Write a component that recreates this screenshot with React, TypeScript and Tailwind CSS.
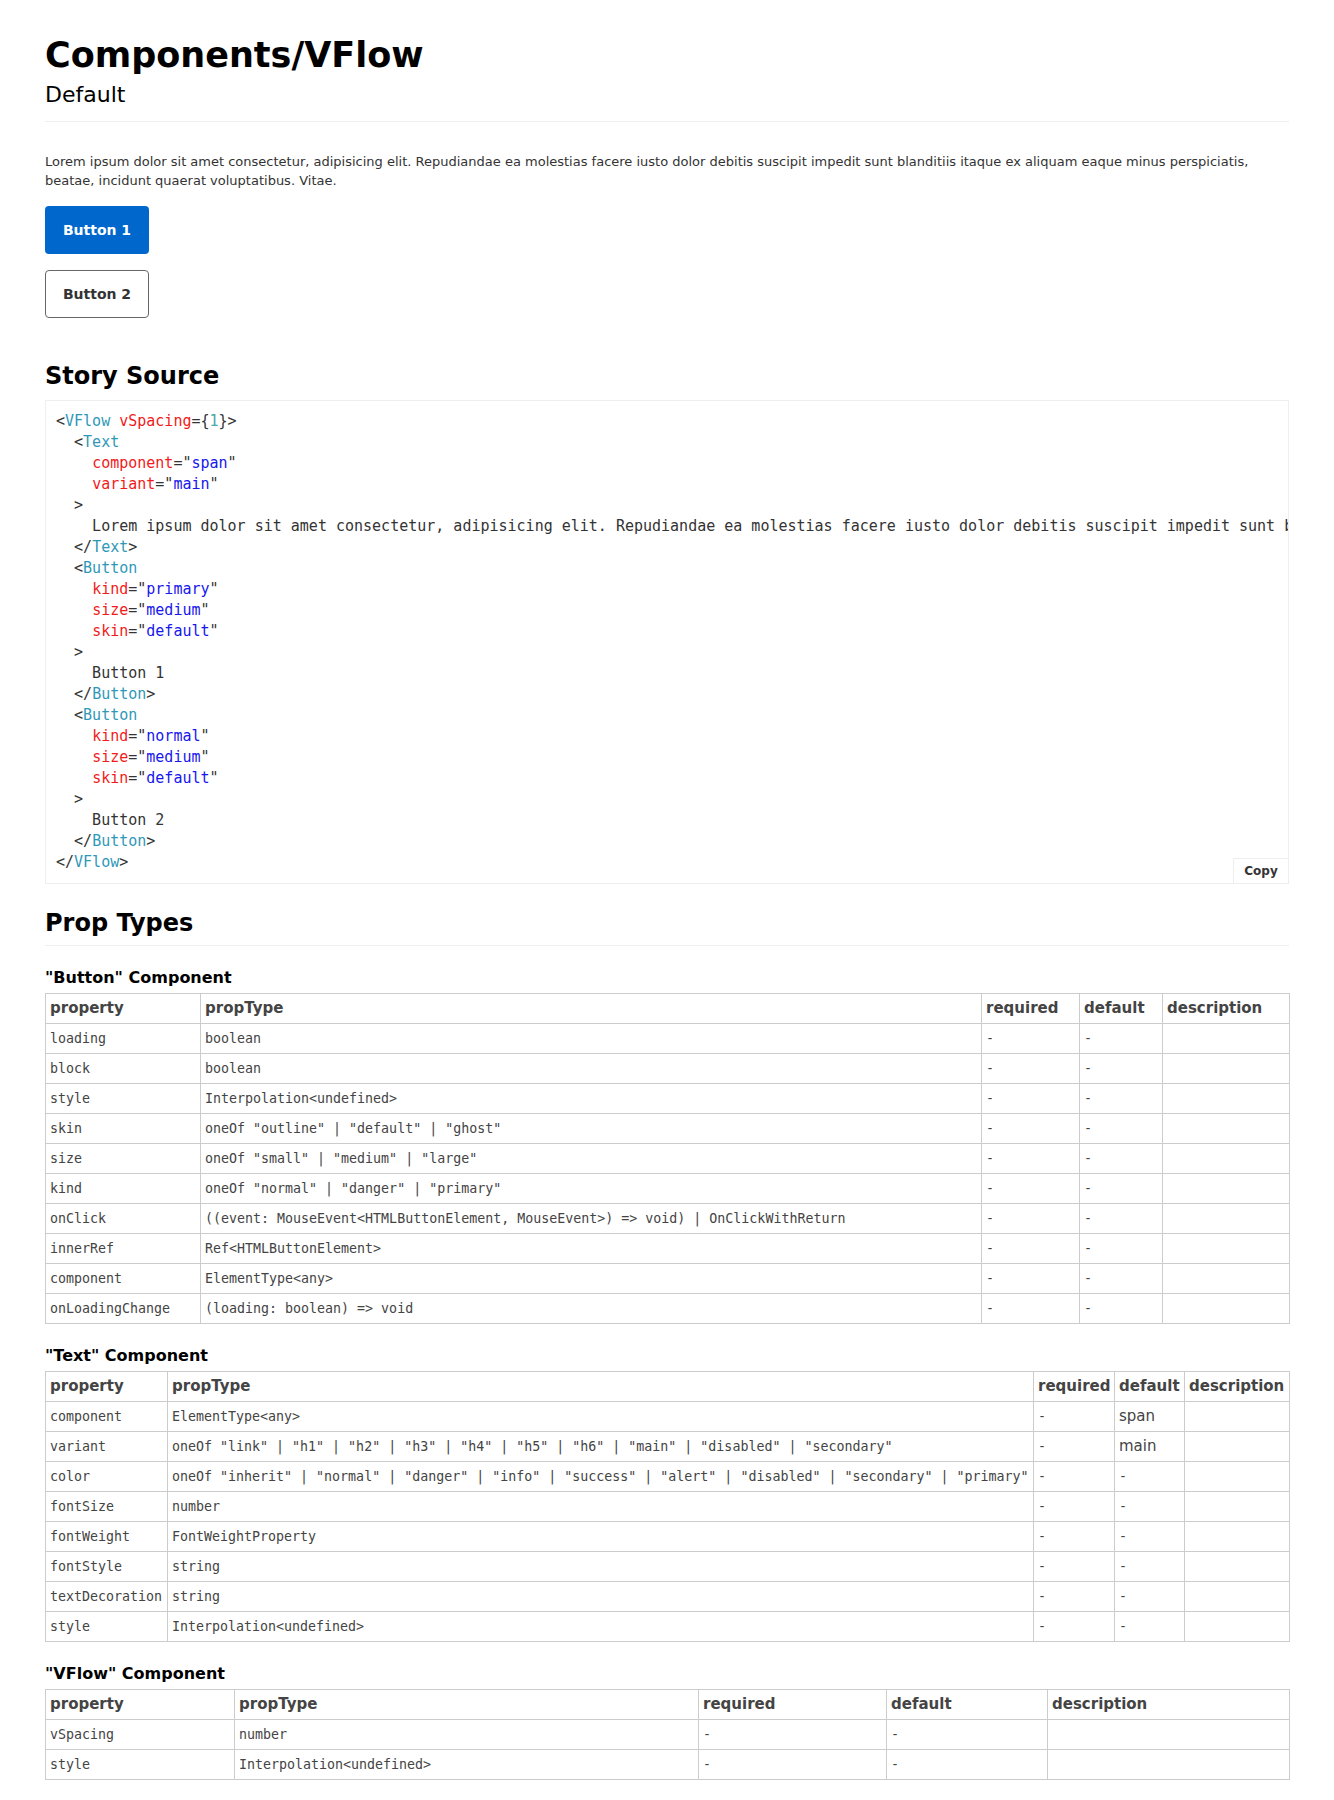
import React from 'react';

const sans = "font-['DejaVu_Sans',sans-serif]";
const mono = "font-['DejaVu_Sans_Mono',monospace]";

const LOREM =
  'Lorem ipsum dolor sit amet consectetur, adipisicing elit. Repudiandae ea molestias facere iusto dolor debitis suscipit impedit sunt blanditiis itaque ex aliquam eaque minus perspiciatis, beatae, incidunt quaerat voluptatibus. Vitae.';

// colores del resaltado de sintaxis
const P = 'text-[#333]';
const T = 'text-[#2f98b8]';
const A = 'text-[#f21b1b]';
const S = 'text-[#1717ee]';
const N = 'text-[#4aa8a8]';

type Seg = [string, string];

const attr = (name: string, value: string): Seg[] => [
  [P, '    '],
  [A, name],
  [P, '="'],
  [S, value],
  [P, '"'],
];

const codeLines: Seg[][] = [
  [[P, '<'], [T, 'VFlow'], [P, ' '], [A, 'vSpacing'], [P, '={'], [N, '1'], [P, '}>']],
  [[P, '  <'], [T, 'Text']],
  attr('component', 'span'),
  attr('variant', 'main'),
  [[P, '  >']],
  [[P, '    ' + LOREM]],
  [[P, '  </'], [T, 'Text'], [P, '>']],
  [[P, '  <'], [T, 'Button']],
  attr('kind', 'primary'),
  attr('size', 'medium'),
  attr('skin', 'default'),
  [[P, '  >']],
  [[P, '    Button 1']],
  [[P, '  </'], [T, 'Button'], [P, '>']],
  [[P, '  <'], [T, 'Button']],
  attr('kind', 'normal'),
  attr('size', 'medium'),
  attr('skin', 'default'),
  [[P, '  >']],
  [[P, '    Button 2']],
  [[P, '  </'], [T, 'Button'], [P, '>']],
  [[P, '</'], [T, 'VFlow'], [P, '>']],
];

type Row = { name: string; type: string; def?: string };

const buttonProps: Row[] = [
  { name: 'loading', type: 'boolean' },
  { name: 'block', type: 'boolean' },
  { name: 'style', type: 'Interpolation<undefined>' },
  { name: 'skin', type: 'oneOf "outline" | "default" | "ghost"' },
  { name: 'size', type: 'oneOf "small" | "medium" | "large"' },
  { name: 'kind', type: 'oneOf "normal" | "danger" | "primary"' },
  { name: 'onClick', type: '((event: MouseEvent<HTMLButtonElement, MouseEvent>) => void) | OnClickWithReturn' },
  { name: 'innerRef', type: 'Ref<HTMLButtonElement>' },
  { name: 'component', type: 'ElementType<any>' },
  { name: 'onLoadingChange', type: '(loading: boolean) => void' },
];

const textProps: Row[] = [
  { name: 'component', type: 'ElementType<any>', def: 'span' },
  {
    name: 'variant',
    type: 'oneOf "link" | "h1" | "h2" | "h3" | "h4" | "h5" | "h6" | "main" | "disabled" | "secondary"',
    def: 'main',
  },
  {
    name: 'color',
    type: 'oneOf "inherit" | "normal" | "danger" | "info" | "success" | "alert" | "disabled" | "secondary" | "primary"',
  },
  { name: 'fontSize', type: 'number' },
  { name: 'fontWeight', type: 'FontWeightProperty' },
  { name: 'fontStyle', type: 'string' },
  { name: 'textDecoration', type: 'string' },
  { name: 'style', type: 'Interpolation<undefined>' },
];

const vflowProps: Row[] = [
  { name: 'vSpacing', type: 'number' },
  { name: 'style', type: 'Interpolation<undefined>' },
];

function PropTable({ title, rows, cols }: { title: string; rows: Row[]; cols: string[] }) {
  const th = 'border border-[#ccc] px-[4px] py-0 text-left text-[15px] font-bold leading-[29px] text-[#444]';
  const td = 'border border-[#ccc] px-[4px] py-0 text-[13.3px] leading-[29px] text-[#444] whitespace-nowrap';
  return (
    <div>
      <h3 className="mt-[22px] text-[16px] font-bold leading-[20px] text-black">"{title}" Component</h3>
      <table className="mt-[5px] w-full table-fixed border-collapse">
        <colgroup>
          {cols.map((c, i) => (
            <col key={i} className={c} />
          ))}
        </colgroup>
        <thead>
          <tr>
            <th className={th}>property</th>
            <th className={th}>propType</th>
            <th className={th}>required</th>
            <th className={th}>default</th>
            <th className={th}>description</th>
          </tr>
        </thead>
        <tbody>
          {rows.map((r) => (
            <tr key={r.name}>
              <td className={`${td} ${mono}`}>{r.name}</td>
              <td className={`${td} ${mono}`}>{r.type}</td>
              <td className={`${td} ${mono}`}>-</td>
              {r.def ? (
                <td className={`${td} ${sans} text-[15px]`}>{r.def}</td>
              ) : (
                <td className={`${td} ${mono}`}>-</td>
              )}
              <td className={td}></td>
            </tr>
          ))}
        </tbody>
      </table>
    </div>
  );
}

export default function App() {
  return (
    <div className={`min-h-[1800px] bg-white px-[45px] ${sans}`}>
      <div className="border-b border-[#eee] pt-[30px] pb-[13px]">
        <h1 className="text-[35px] font-bold leading-[51px] text-black">Components/VFlow</h1>
        <h2 className="mt-[1px] text-[22px] font-normal leading-[26px] text-black">Default</h2>
      </div>

      <p className="mt-[30px] text-[13px] leading-[19px] text-[#333]">{LOREM}</p>

      <div className="flex flex-col items-start gap-[16px] mt-[16px]">
        <button className="h-[48px] w-[104px] rounded-[4px] bg-[#0067cd] text-[14px] font-bold text-white">
          Button 1
        </button>
        <button className="h-[48px] w-[104px] rounded-[4px] border border-[#666] bg-white text-[14px] font-bold text-[#333]">
          Button 2
        </button>
      </div>

      <h2 className="mt-[43px] text-[24px] font-bold leading-[30px] text-black">Story Source</h2>
      <div className={`relative mt-[9px] overflow-hidden border border-[#eee] pl-[10px] pr-0 py-[10px] text-[15px] leading-[21px] ${mono}`}>
        {codeLines.map((line, i) => (
          <div key={i} className="whitespace-pre">
            {line.map(([cls, txt], j) => (
              <span key={j} className={cls}>
                {txt}
              </span>
            ))}
          </div>
        ))}
        <button className={`absolute right-0 bottom-0 h-[25px] w-[55px] border-t border-l border-[#eee] bg-white text-[12px] font-bold text-[#333] ${sans}`}>
          Copy
        </button>
      </div>

      <h2 className="mt-[24px] border-b border-[#eee] pb-[7px] text-[24px] font-bold leading-[30px] text-black">
        Prop Types
      </h2>

      <PropTable
        title="Button"
        rows={buttonProps}
        cols={['w-[155px]', 'w-[781px]', 'w-[98px]', 'w-[83px]', 'w-[127px]']}
      />
      <PropTable
        title="Text"
        rows={textProps}
        cols={['w-[122px]', 'w-[866px]', 'w-[81px]', 'w-[70px]', 'w-[105px]']}
      />
      <PropTable
        title="VFlow"
        rows={vflowProps}
        cols={['w-[189px]', 'w-[464px]', 'w-[188px]', 'w-[161px]', 'w-[242px]']}
      />
    </div>
  );
}
